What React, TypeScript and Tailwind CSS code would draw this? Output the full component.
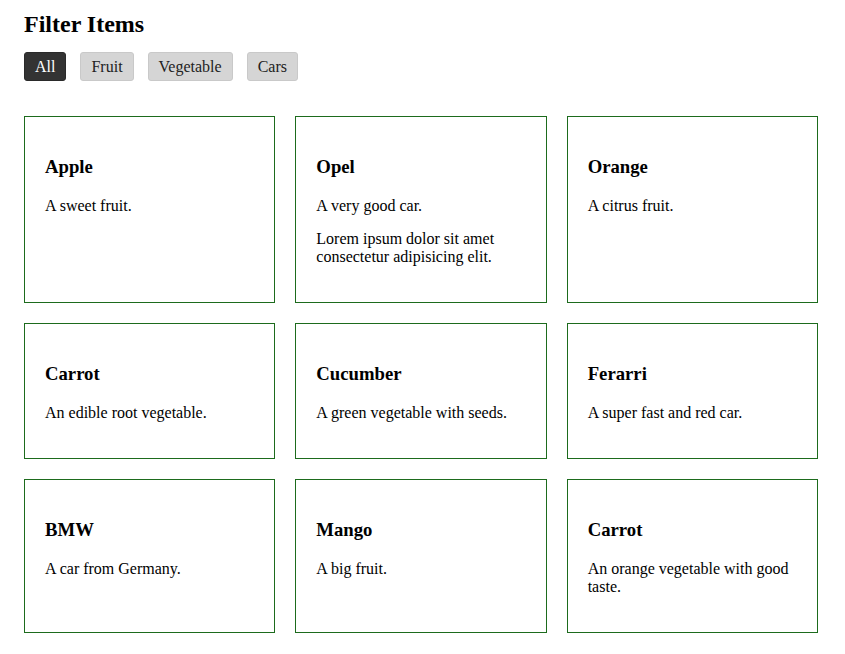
import { useState } from 'react';

type Category = 'fruit' | 'vegetable' | 'cars';

const filters = [
  { key: 'all', label: 'All' },
  { key: 'fruit', label: 'Fruit' },
  { key: 'vegetable', label: 'Vegetable' },
  { key: 'cars', label: 'Cars' },
] as const;

const items: { title: string; text: string[]; category: Category }[] = [
  { title: 'Apple', text: ['A sweet fruit.'], category: 'fruit' },
  {
    title: 'Opel',
    text: ['A very good car.', 'Lorem ipsum dolor sit amet consectetur adipisicing elit.'],
    category: 'cars',
  },
  { title: 'Orange', text: ['A citrus fruit.'], category: 'fruit' },
  { title: 'Carrot', text: ['An edible root vegetable.'], category: 'vegetable' },
  { title: 'Cucumber', text: ['A green vegetable with seeds.'], category: 'vegetable' },
  { title: 'Ferarri', text: ['A super fast and red car.'], category: 'cars' },
  { title: 'BMW', text: ['A car from Germany.'], category: 'cars' },
  { title: 'Mango', text: ['A big fruit.'], category: 'fruit' },
  { title: 'Carrot', text: ['An orange vegetable with good taste.'], category: 'vegetable' },
];

export default function App() {
  const [active, setActive] = useState<string>('all');
  const visible = items.filter((i) => active === 'all' || i.category === active);

  return (
    <div className="min-h-screen bg-white pl-6 pr-[27px] pb-6 text-black font-['Liberation_Serif',_'Times_New_Roman',_serif]">
      <h2 className="pt-[11px] text-2xl font-bold leading-[27.6px]">Filter Items</h2>

      {/* Filter buttons */}
      <div className="mt-[13px] flex gap-[14px]">
        {filters.map(({ key, label }) => (
          <button
            key={key}
            onClick={() => setActive(key)}
            className={
              active === key
                ? 'rounded-[3px] border border-[#2a2a2a] bg-[#333333] px-[10px] py-[4px] text-base leading-[19px] text-white'
                : 'rounded-[3px] border border-[#c9c9c9] bg-[#d5d5d5] px-[10px] py-[4px] text-base leading-[19px] text-[#222]'
            }
          >
            {label}
          </button>
        ))}
      </div>

      {/* Cards */}
      <div className="mt-[35px] grid grid-cols-3 gap-x-[20px] gap-y-[20px]">
        {visible.map((item, idx) => (
          <div key={idx} className="border border-[#1d6b1d] px-5 pt-5 pb-[21px]">
            <h3 className="mt-[18px] mb-[19px] text-[18.72px] font-bold leading-[23px]">
              {item.title}
            </h3>
            {item.text.map((t, j) => (
              <p key={j} className="mb-[15px] text-base leading-[18px]">
                {t}
              </p>
            ))}
          </div>
        ))}
      </div>
    </div>
  );
}
